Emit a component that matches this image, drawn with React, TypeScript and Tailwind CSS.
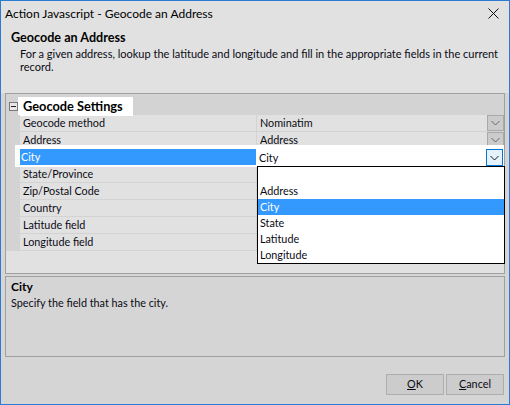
import React from "react";

const LINE = "bg-[#d3d3d3]";

type Row = { label: string; value?: string; btn?: boolean; selected?: boolean };

const rows: Row[] = [
  { label: "Geocode method", value: "Nominatim", btn: true },
  { label: "Address", value: "Address", btn: true },
  { label: "City", value: "City", selected: true },
  { label: "State/Province" },
  { label: "Zip/Postal Code" },
  { label: "Country" },
  { label: "Latitude field" },
  { label: "Longitude field" },
];

function Chevron({ color }: { color: string }) {
  return (
    <svg width="9" height="6" viewBox="0 0 9 6">
      <path d="M0.5 1 L4.5 5 L8.5 1" fill="none" stroke={color} strokeWidth="1" />
    </svg>
  );
}

function DropBtn({ active }: { active?: boolean }) {
  return active ? (
    <div className="w-[17px] h-[17px] border border-[#0078d7] bg-[#e5f1fb] flex items-center justify-center">
      <Chevron color="#1a1a1a" />
    </div>
  ) : (
    <div className="w-[17px] h-[16px] border border-[#a9a9a9] bg-[#cbcbcb] flex items-center justify-center">
      <Chevron color="#666666" />
    </div>
  );
}

function PropRow({ row }: { row: Row }) {
  if (row.selected) {
    return (
      <div className="relative flex h-[17px]">
        <div className="absolute left-[9px] right-0 top-[-4px] h-[22px] bg-white" />
        <div className={`relative w-[9px] ${LINE}`} />
        <div className="relative w-[5px]" />
        <div className="relative w-[236px] h-[16px] bg-[#3399ff] text-white pl-[1px] leading-[16px]">{row.label}</div>
        <div className="relative w-[1px]" />
        <div className="relative flex-1 flex items-center justify-between pl-[2px] pr-[1px]">
          <span className="leading-[16px]">{row.value}</span>
          <DropBtn active />
        </div>
      </div>
    );
  }
  return (
    <div className={`flex h-[17px] border-b border-[#d3d3d3]`}>
      <div className={`w-[14px] ${LINE}`} />
      <div className="w-[236px] pl-[3px] leading-[16px]">{row.label}</div>
      <div className={`w-[1px] ${LINE}`} />
      <div className="flex-1 flex items-start justify-between pl-[3px]">
        <span className="leading-[16px]">{row.value ?? ""}</span>
        {row.btn && <DropBtn />}
      </div>
    </div>
  );
}

export default function App() {
  return (
    <div className="relative w-[510px] h-[405px] border border-[#2b7bd4] flex flex-col text-[10.8px] text-[#0a0a14] font-['Lato','Noto_Sans',sans-serif] overflow-hidden">
      {/* header */}
      <div className="h-[92px] bg-[#e1e1e1] flex flex-col shrink-0">
        <div className="h-[25px] flex items-center justify-between pl-[4px] pr-[10px]">
          <span className="text-[#000] text-[12px]">Action Javascript - Geocode an Address</span>
          <svg width="11" height="11" viewBox="0 0 11 11">
            <path d="M0.5 0.5 L10.5 10.5 M10.5 0.5 L0.5 10.5" stroke="#111" strokeWidth="1" />
          </svg>
        </div>
        <div className="pl-[10px] font-bold leading-[16px] mt-[4px] text-[12.6px] text-[#000]">Geocode an Address</div>
        <div className="pl-[19px] pr-[8px] leading-[13px] mt-[1px] text-[11px]">
          For a given address, lookup the latitude and longitude and fill in the appropriate fields in the current record.
        </div>
      </div>

      {/* body */}
      <div className="flex-1 bg-[#d5d5d5] flex flex-col px-[4px]">
        {/* property grid */}
        <div className="h-[181px] border border-[#a0a0a0] bg-[#e1e1e1] flex flex-col">
          <div className={`h-[3px] ${LINE}`} />
          <div className={`h-[18px] flex items-center ${LINE}`}>
            <div className="w-[12px] flex items-center justify-end">
              <div className="w-[9px] h-[9px] border border-[#7a7a7a] bg-[#e8e8e8] flex items-center justify-center">
                <div className="w-[5px] h-[1px] bg-[#222]" />
              </div>
            </div>
            <div className="w-[115px] h-[19px] bg-white flex items-center pl-[5px] font-bold text-[#000] mt-[1px] text-[12.8px]">
              Geocode Settings
            </div>
          </div>
          {rows.map((r) => (
            <PropRow key={r.label} row={r} />
          ))}
        </div>

        {/* description */}
        <div className="mt-[2px] h-[81px] border border-[#a0a0a0] bg-[#d5d5d5] pl-[5px] pt-[2px]">
          <div className="font-bold leading-[16px] text-[#000] text-[12px]">City</div>
          <div className="leading-[16px]">Specify the field that has the city.</div>
        </div>

        {/* buttons */}
        <div className="flex justify-end gap-[2px] mt-[17px] pr-[1px]">
          <div className="w-[58px] h-[21px] border border-[#adadad] bg-[#cccccc] flex items-center justify-center">
            <span><span className="underline">O</span>K</span>
          </div>
          <div className="w-[58px] h-[21px] border border-[#adadad] bg-[#cccccc] flex items-center justify-center">
            <span><span className="underline">C</span>ancel</span>
          </div>
        </div>
      </div>

      {/* open dropdown list */}
      <div className="absolute left-[256px] top-[165px] w-[248px] h-[98px] border border-[#000] bg-white flex flex-col">
        <div className="h-[16px]" />
        <div className="h-[16px] pl-[2px] leading-[16px]">Address</div>
        <div className="h-[16px] pl-[2px] leading-[16px] bg-[#3399ff] text-white">City</div>
        <div className="h-[16px] pl-[2px] leading-[16px]">State</div>
        <div className="h-[16px] pl-[2px] leading-[16px]">Latitude</div>
        <div className="h-[16px] pl-[2px] leading-[16px]">Longitude</div>
      </div>
    </div>
  );
}
